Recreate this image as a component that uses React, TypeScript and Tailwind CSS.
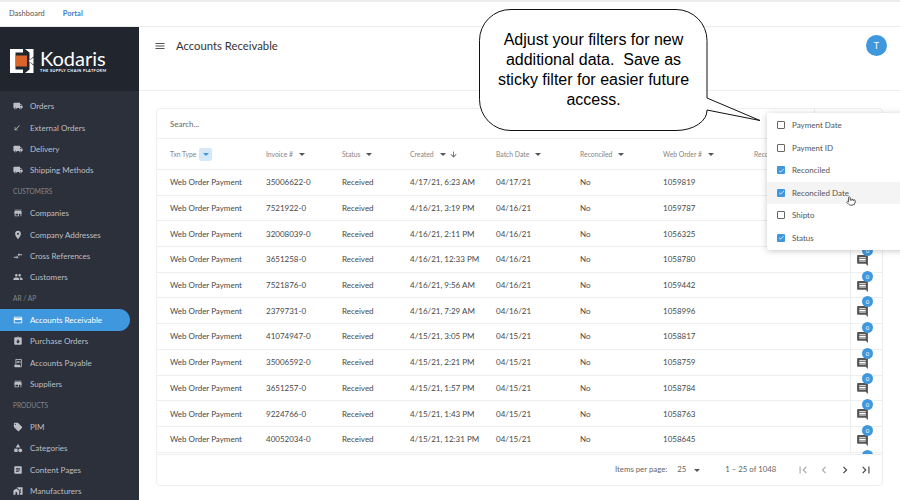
import {
  MdArticle,
  MdCallReceived,
  MdCategory,
  MdComment,
  MdCompareArrows,
  MdCreditCard,
  MdFirstPage,
  MdHomeWork,
  MdLastPage,
  MdChevronLeft,
  MdChevronRight,
  MdLocalOffer,
  MdLocalShipping,
  MdMenu,
  MdPeople,
  MdPlace,
  MdAssignmentReturned,
  MdReceiptLong,
  MdStore,
  MdArrowDownward,
  MdCheck,
} from "react-icons/md";
import { Pointer } from "lucide-react";

const nav: any[] = [
  { icon: MdLocalShipping, label: "Orders" },
  { icon: MdCallReceived, label: "External Orders", small: true },
  { icon: MdLocalShipping, label: "Delivery" },
  { icon: MdLocalShipping, label: "Shipping Methods" },
  { section: "CUSTOMERS" },
  { icon: MdStore, label: "Companies" },
  { icon: MdPlace, label: "Company Addresses" },
  { icon: MdCompareArrows, label: "Cross References" },
  { icon: MdPeople, label: "Customers" },
  { section: "AR / AP" },
  { icon: MdCreditCard, label: "Accounts Receivable", active: true },
  { icon: MdAssignmentReturned, label: "Purchase Orders" },
  { icon: MdReceiptLong, label: "Accounts Payable" },
  { icon: MdStore, label: "Suppliers" },
  { section: "PRODUCTS" },
  { icon: MdLocalOffer, label: "PIM" },
  { icon: MdCategory, label: "Categories" },
  { icon: MdArticle, label: "Content Pages" },
  { icon: MdHomeWork, label: "Manufacturers" },
];

const rows = [
  ["35006622-0", "4/17/21, 6:23 AM", "04/17/21", "1059819"],
  ["7521922-0", "4/16/21, 3:19 PM", "04/16/21", "1059787"],
  ["32008039-0", "4/16/21, 2:11 PM", "04/16/21", "1056325"],
  ["3651258-0", "4/16/21, 12:33 PM", "04/16/21", "1058780"],
  ["7521876-0", "4/16/21, 9:56 AM", "04/16/21", "1059442"],
  ["2379731-0", "4/16/21, 7:29 AM", "04/16/21", "1058996"],
  ["41074947-0", "4/15/21, 3:05 PM", "04/15/21", "1058817"],
  ["35006592-0", "4/15/21, 2:21 PM", "04/15/21", "1058759"],
  ["3651257-0", "4/15/21, 1:57 PM", "04/15/21", "1058784"],
  ["9224766-0", "4/15/21, 1:43 PM", "04/15/21", "1058763"],
  ["40052034-0", "4/15/21, 12:31 PM", "04/15/21", "1058645"],
  ["", "", "", ""],
];

const filters = [
  ["Payment Date", false],
  ["Payment ID", false],
  ["Reconciled", true],
  ["Reconciled Date", true],
  ["Shipto", false],
  ["Status", true],
] as const;

function Caret({ className = "" }: { className?: string }) {
  return <span className={`inline-block w-0 h-0 border-x-[3.5px] border-x-transparent border-t-[3.5px] border-t-[#555] ${className}`} />;
}

function Logo() {
  return (
    <div className="flex items-center">
      <svg width="24" height="24" viewBox="0 0 24 24" className="shrink-0">
        <path fill="#fff" d="M0 0h13v3.500H5.500v17H13V24H0z" />
        <path fill="#fff" d="M15 0h8.500v7.500L19.500 11V3.500zM15 24h8.500v-7.500L19.500 13v7.500zM18.500 12l5-3.500v7z" />
        <rect x="6" y="6.500" width="11" height="11" fill="#d9652b" />
      </svg>
      <div className="ml-[6px] flex flex-col">
        <span className="text-white text-[20px] leading-[19px] font-['Lato']">Kodaris</span>
        <span className="text-white text-[3.8px] leading-[5px] font-bold tracking-[0.42px] font-['Lato'] whitespace-nowrap">THE SUPPLY CHAIN PLATFORM</span>
      </div>
    </div>
  );
}

function Sidebar() {
  return (
    <aside className="w-[139px] shrink-0 bg-[#2b303a] overflow-hidden">
      <div className="h-[64px] bg-[#21252e] flex items-center pl-[10px] pt-[4px]">
        <Logo />
      </div>
      <nav className="pt-[4.5px] pr-[9px]">
        {nav.map((item, i) =>
          item.section ? (
            <div key={i} className="h-[21.4px] pl-[13px] flex items-center text-[6.6px] text-[#82878f]">{item.section}</div>
          ) : (
            <div
              key={i}
              className={`h-[21.4px] pl-[13px] flex items-center text-[8px] rounded-r-full ${item.active ? "bg-[#3f97dd] text-white" : "text-[#bcbfc5]"}`}
            >
              <span className="w-[17px] shrink-0">
                <item.icon size={item.small ? 8 : 10} className="block" />
              </span>
              <span>{item.label}</span>
            </div>
          ),
        )}
      </nav>
    </aside>
  );
}

function Table() {
  const cols = ["w-[96px]", "w-[76px]", "w-[68px]", "w-[86px]", "w-[84px]", "w-[83px]", "w-[91px]", "w-[96px]"];
  const heads = ["Invoice #", "Status", "Created", "Batch Date", "Reconciled", "Web Order #", "Reconciled Date"];
  return (
    <section className="flex-1 min-h-0 flex flex-col border border-[#eceef0] rounded-[4px] bg-white overflow-hidden">
      <div className="h-[30px] shrink-0 border-b border-[#eceef0] flex items-center pl-[13px] text-[8px] text-[#666]">
        <span className="flex-1 pt-[1px]">Search...</span>
        <span className="h-full w-[68px] border-l border-[#eceef0]" />
      </div>
      <div className="h-[31px] shrink-0 border-b border-[#eceef0] flex items-center pl-[13px] text-[6.8px] text-[#858585]">
        <div className={`${cols[0]} shrink-0 flex items-center`}>
          <span>Txn Type</span>
          <span className="ml-[3px] w-[13px] h-[13px] rounded-[2px] bg-[#d5e8f8] flex items-center justify-center">
            <span className="w-0 h-0 border-x-[3.5px] border-x-transparent border-t-[3.5px] border-t-[#3f97dd]" />
          </span>
        </div>
        {heads.map((h, i) => (
          <div key={h} className={`${cols[i + 1]} shrink-0 flex items-center whitespace-nowrap`}>
            <span>{h}</span>
            <Caret className="ml-[6px]" />
            {h === "Created" && <MdArrowDownward size={9} className="ml-[3px] text-[#555]" />}
          </div>
        ))}
      </div>
      <div className="flex-1 min-h-0 overflow-hidden">
        {rows.map((r, i) => (
          <div key={i} className="h-[25.7px] border-b border-[#eceef0] flex items-center pl-[13px] text-[8px] text-[#484848]">
            <div className={`${cols[0]} shrink-0`}>{r[0] && "Web Order Payment"}</div>
            <div className={`${cols[1]} shrink-0`}>{r[0]}</div>
            <div className={`${cols[2]} shrink-0`}>{r[0] && "Received"}</div>
            <div className={`${cols[3]} shrink-0`}>{r[1]}</div>
            <div className={`${cols[4]} shrink-0`}>{r[2]}</div>
            <div className={`${cols[5]} shrink-0`}>{r[0] && "No"}</div>
            <div className={`${cols[6]} shrink-0`}>{r[3]}</div>
            <div className="w-[96px] shrink-0" />
            <div className="h-full flex-1 border-l border-[#eceef0] pl-[5px] flex items-center">
              <span className="relative block mt-[2px]">
                <MdComment size={13} className="text-[#555] block" />
                <span className="absolute -top-[9px] left-[6px] w-[11px] h-[11px] rounded-full bg-[#3f97dd] text-white text-[6px] flex items-center justify-center">{r[0] && "0"}</span>
              </span>
            </div>
          </div>
        ))}
      </div>
      <div className="h-[31px] shrink-0 border-t border-[#eceef0] flex items-center text-[7.8px] text-[#666]">
        <span className="ml-[458px]">Items per page:</span>
        <span className="ml-[10px]">25</span>
        <Caret className="ml-[8px]" />
        <span className="ml-[25px]">1 – 25 of 1048</span>
        <span className="ml-[20px] flex items-center gap-[7px]">
          <MdFirstPage size={14} className="text-[#aaa]" />
          <MdChevronLeft size={14} className="text-[#aaa]" />
          <MdChevronRight size={14} className="text-[#444]" />
          <MdLastPage size={14} className="text-[#444]" />
        </span>
      </div>
    </section>
  );
}

function FilterMenu() {
  return (
    <div className="absolute left-[767px] top-[113px] w-[140px] py-[1px] bg-white rounded-[2px] shadow-[0_1px_6px_rgba(0,0,0,0.22)]">
      {filters.map(([label, on]) => (
        <div key={label} className={`h-[22.5px] pl-[10px] flex items-center gap-[7px] text-[8px] text-[#555] ${label === "Reconciled Date" ? "bg-[#f4f4f4]" : ""}`}>
          {on ? (
            <span className="w-[8px] h-[8px] rounded-[1px] bg-[#3f97dd] flex items-center justify-center"><MdCheck size={7} className="text-white" /></span>
          ) : (
            <span className="w-[8px] h-[8px] rounded-[1px] border border-[#666]" />
          )}
          <span>{label}</span>
        </div>
      ))}
      <Pointer size={10} className="absolute left-[79px] top-[83px] fill-white text-[#444]" />
    </div>
  );
}

function Callout() {
  return (
    <div className="absolute left-[479px] top-[9px] w-[284px] h-[122px]">
      <svg width="284" height="122" viewBox="0 0 284 122" className="absolute inset-0">
        <path
          d="M32 .5H197a31 31 0 0 1 31 31V89L281 111.500 228 101a31 20 0 0 1-31 20.500H32A31 31 0 0 1 .5 90.500V31.500A31 31 0 0 1 32 .5Z"
          fill="#fff"
          stroke="#111"
          strokeWidth="1"
        />
      </svg>
      <p className="absolute left-0 top-[21px] w-[229px] px-[16px] text-center text-[16px] leading-[20px] text-black font-['Liberation_Sans',sans-serif] whitespace-pre-wrap">
        Adjust your filters for new additional data.  Save as sticky filter for easier future access.
      </p>
    </div>
  );
}

export default function App() {
  return (
    <div className="relative w-[900px] h-[500px] overflow-hidden bg-white font-['Lato',sans-serif]">
      <div className="h-[27px] border-t-2 border-b border-[#ececec] flex items-center pl-[9px] gap-[18px] text-[7.500px]">
        <span className="text-[#555]">Dashboard</span>
        <span className="text-[#3f7fc4] font-bold">Portal</span>
      </div>
      <div className="flex h-[473px]">
        <Sidebar />
        <main className="flex-1 min-w-0 flex flex-col">
          <header className="h-[64px] shrink-0 border-b border-[#eeeeee] flex pl-[15px] pr-[13px] pt-[8px]">
            <MdMenu size={12} className="text-[#555] mt-[5px]" />
            <h1 className="ml-[10px] -mt-[1px] text-[11.300px] leading-[24px] text-[#333]">Accounts Receivable</h1>
            <span className="ml-auto w-[21px] h-[21px] rounded-full bg-[#3f97dd] text-white text-[9px] flex items-center justify-center">T</span>
          </header>
          <div className="flex-1 min-h-0 flex flex-col pl-[17px] pr-[17px] pt-[17px] pb-[14px]">
            <Table />
          </div>
        </main>
      </div>
      <FilterMenu />
      <Callout />
    </div>
  );
}
